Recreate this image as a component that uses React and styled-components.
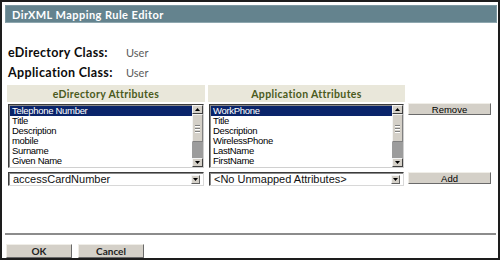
import React from "react";
import styled, { createGlobalStyle } from "styled-components";

const GlobalStyle = createGlobalStyle`
  body {
    margin: 0;
    background: #ffffff;
    font-family: "Liberation Sans", Arial, sans-serif;
  }
`;

const Frame = styled.div`
  width: 500px;
  height: 260px;
  box-sizing: border-box;
  border: 2px solid #1d1d1d;
  padding: 3px 1px 0 3px;
  display: flex;
  flex-direction: column;
  overflow: hidden;
  background: #fff;
`;

const TitleBar = styled.div`
  height: 22px;
  box-sizing: border-box;
  background: #64838e;
  border: 1px solid #7c98a1;
  border-bottom-color: #8ea7af;
  display: flex;
  align-items: center;
  padding-left: 6px;
  color: #ffffff;
  font-family: Lato, "Open Sans", sans-serif;
  font-weight: 700;
  font-size: 11px;
  letter-spacing: 0.45px;
`;

const ClassList = styled.div`
  margin: 19px 0 0 3px;
  display: flex;
  flex-direction: column;
`;

const ClassRow = styled.div`
  display: flex;
  align-items: center;
  height: 20px;
`;

const ClassLabel = styled.span`
  width: 118px;
  font-family: Lato, "Open Sans", sans-serif;
  font-weight: 700;
  font-size: 12.5px;
  letter-spacing: 0.35px;
  color: #0c0c0c;
`;

const ClassValue = styled.span`
  font-family: Lato, "Open Sans", sans-serif;
  font-size: 11px;
  color: #5a5a5a;
`;

const AttrGrid = styled.div`
  margin: 3px 0 0 2px;
  display: grid;
  grid-template-columns: 198px 197px 83px;
  grid-template-rows: 19px 68px 14px;
  column-gap: 3px;
`;

const ColumnHeader = styled.div`
  height: 17px;
  background: #e9e7da;
  display: flex;
  align-items: center;
  justify-content: center;
  color: #4a5a1c;
  font-family: Lato, "Open Sans", sans-serif;
  font-weight: 700;
  font-size: 10.5px;
  letter-spacing: 0.35px;
`;

const ListBox = styled.div`
  height: 64px;
  margin: 0 1px;
  box-sizing: border-box;
  border: 1px solid;
  border-color: #3c3c3c #d0d0d0 #d0d0d0 #3c3c3c;
  box-shadow: inset 1px 1px 0 #8a8a8a;
  display: flex;
  background: #fff;
`;

const ListItems = styled.div`
  flex: 1;
  padding: 1px 0 0 1px;
  overflow: hidden;
`;

const ListItem = styled.div`
  height: 10px;
  line-height: 10px;
  padding-left: 2px;
  font-size: 9.5px;
  letter-spacing: -0.3px;
  white-space: nowrap;
  color: ${(p) => (p.$selected ? "#ffffff" : "#000000")};
  background: ${(p) => (p.$selected ? "#0a246a" : "transparent")};
`;

const ScrollBar = styled.div`
  width: 11px;
  display: flex;
  flex-direction: column;
  background: #d4d0c8;
`;

const ScrollButton = styled.div`
  height: 9px;
  box-sizing: border-box;
  border: 1px solid;
  border-color: #f4f4f4 #404040 #404040 #f4f4f4;
  background: #d4d0c8;
  display: flex;
  align-items: center;
  justify-content: center;
`;

const ScrollThumb = styled.div`
  height: 28px;
  box-sizing: border-box;
  border: 1px solid;
  border-color: #f4f4f4 #808080 #808080 #f4f4f4;
  background: #d4d0c8;
  display: flex;
  flex-direction: column;
  align-items: center;
  justify-content: center;
  gap: 2px;
`;

const Grip = styled.span`
  width: 5px;
  height: 1px;
  background: #808080;
  box-shadow: 0 1px 0 #fff;
`;

const ScrollTrack = styled.div`
  flex: 1;
  background: #9c9c9c;
`;

const Combo = styled.div`
  height: 14px;
  margin: 0 1px;
  box-sizing: border-box;
  border: 1px solid;
  border-color: #3c3c3c #d8d8d8 #d8d8d8 #3c3c3c;
  box-shadow: inset 1px 1px 0 #8a8a8a;
  background: #fff;
  display: flex;
  align-items: center;
  padding: 0 3px 0 4px;
`;

const ComboText = styled.span`
  flex: 1;
  font-size: 11px;
  line-height: 12px;
  color: #111;
  white-space: nowrap;
  overflow: hidden;
`;

const ComboButton = styled.span`
  width: 9px;
  height: 9px;
  box-sizing: border-box;
  border: 1px solid;
  border-color: #f4f4f4 #606060 #606060 #f4f4f4;
  background: #d4d0c8;
  display: flex;
  align-items: center;
  justify-content: center;
`;

const ActionButton = styled.div`
  height: 12px;
  box-sizing: border-box;
  border: 1px solid;
  border-color: #f0eee8 #6a6a6a #6a6a6a #f0eee8;
  background: #d4d0c8;
  display: flex;
  align-items: center;
  justify-content: center;
  font-size: 9.5px;
  color: #000;
  align-self: start;
  margin-top: ${(p) => p.$offset || 0}px;
`;

const Separator = styled.div`
  margin-top: 47px;
  margin-right: 1px;
  height: 2px;
  background: #8c8c8c;
`;

const Footer = styled.div`
  margin: 9px 0 0 1px;
  display: flex;
  gap: 6px;
`;

const FooterButton = styled.div`
  width: 66px;
  height: 14px;
  box-sizing: border-box;
  border: 1px solid;
  border-color: #f0eee8 #6a6a6a #6a6a6a #f0eee8;
  background: #d4d0c8;
  display: flex;
  align-items: center;
  justify-content: center;
  font-family: Lato, "Open Sans", sans-serif;
  font-weight: 700;
  font-size: 10px;
  color: #222;
`;

const Arrow = ({ up }) => (
  <svg width="5" height="3" viewBox="0 0 5 3">
    <path d={up ? "M2.5 0 L5 3 L0 3 Z" : "M0 0 L5 0 L2.5 3 Z"} fill="#000" />
  </svg>
);

const AttrList = ({ items }) => (
  <ListBox>
    <ListItems>
      {items.map((name, i) => (
        <ListItem key={name} $selected={i === 0}>
          {name}
        </ListItem>
      ))}
    </ListItems>
    <ScrollBar>
      <ScrollButton>
        <Arrow up />
      </ScrollButton>
      <ScrollThumb>
        <Grip />
        <Grip />
        <Grip />
      </ScrollThumb>
      <ScrollTrack />
      <ScrollButton>
        <Arrow />
      </ScrollButton>
    </ScrollBar>
  </ListBox>
);

const Dropdown = ({ value }) => (
  <Combo>
    <ComboText>{value}</ComboText>
    <ComboButton>
      <Arrow />
    </ComboButton>
  </Combo>
);

const eDirAttrs = [
  "Telephone Number",
  "Title",
  "Description",
  "mobile",
  "Surname",
  "Given Name",
];

const appAttrs = [
  "WorkPhone",
  "Title",
  "Description",
  "WirelessPhone",
  "LastName",
  "FirstName",
];

export default function App() {
  return (
    <>
      <GlobalStyle />
      <Frame>
        <TitleBar>DirXML Mapping Rule Editor</TitleBar>
        <ClassList>
          <ClassRow>
            <ClassLabel>eDirectory Class:</ClassLabel>
            <ClassValue>User</ClassValue>
          </ClassRow>
          <ClassRow>
            <ClassLabel>Application Class:</ClassLabel>
            <ClassValue>User</ClassValue>
          </ClassRow>
        </ClassList>
        <AttrGrid>
          <ColumnHeader>eDirectory Attributes</ColumnHeader>
          <ColumnHeader>Application Attributes</ColumnHeader>
          <div />
          <AttrList items={eDirAttrs} />
          <AttrList items={appAttrs} />
          <ActionButton $offset={-1}>Remove</ActionButton>
          <Dropdown value="accessCardNumber" />
          <Dropdown value="<No Unmapped Attributes>" />
          <ActionButton>Add</ActionButton>
        </AttrGrid>
        <Separator />
        <Footer>
          <FooterButton>OK</FooterButton>
          <FooterButton>Cancel</FooterButton>
        </Footer>
      </Frame>
    </>
  );
}
